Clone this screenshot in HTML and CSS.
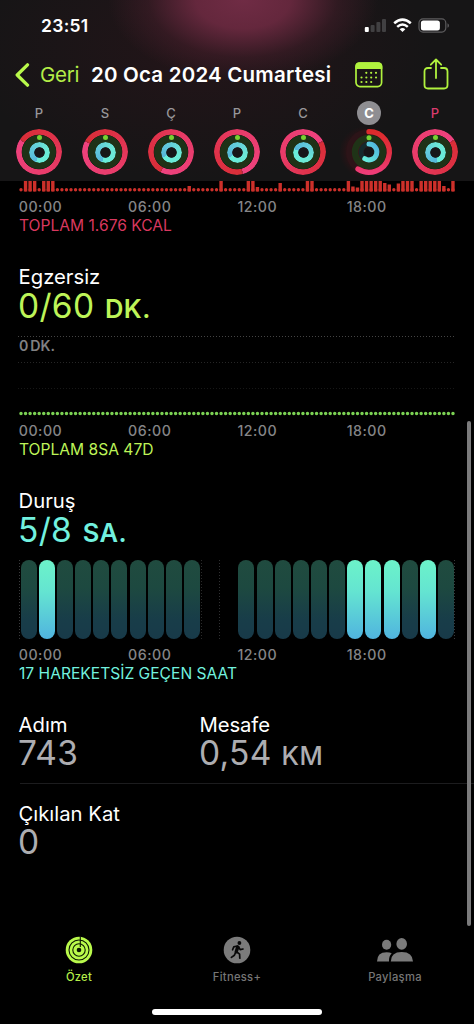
FILE: index.html
```html
<!DOCTYPE html>
<html lang="tr">
<head>
<meta charset="utf-8">
<title>Özet</title>
<link rel="stylesheet" href="styles.css">
</head>
<body>
<div class="phone">
  <header class="header">
    <div class="status">
      <span class="clock">23:51</span>
      <svg class="status-icons" width="86" height="16" viewBox="0 0 86 16">
        <rect x="0.8" y="9" width="4" height="5" rx="1" fill="#fff"/>
        <g fill="#414042"><rect x="6.6" y="7" width="4" height="7" rx="1"/><rect x="12.4" y="4" width="4" height="10" rx="1"/><rect x="18" y="1" width="4" height="13" rx="1"/></g>
        <g fill="none" stroke="#fff" stroke-width="2.5"><path d="M30.2 5.3Q38.5-2 46.8 5.3"/><path d="M33.2 8.9Q38.5 4.2 43.8 8.9"/></g>
        <path d="M38.5 14 35.7 11.2Q38.5 8.8 41.3 11.2Z" fill="#fff"/>
        <rect x="55" y=".9" width="26.800" height="13.2" rx="4" fill="none" stroke="#5d5c5e" stroke-width="1.2"/>
        <rect x="56.900" y="2.6" width="19" height="9.8" rx="2.5" fill="#fff"/>
        <path d="M83.500 5.3q1.5.6 1.5 2.3T83.500 9.8z" fill="#5d5c5e"/>
      </svg>
    </div>
    <nav class="nav">
      <svg class="back" width="15" height="26" viewBox="0 0 15 26"><path d="M12.5 2.800 2.200 13l10.300 10.200" fill="none" stroke="#b9f94b" stroke-width="3.300" stroke-linecap="round" stroke-linejoin="round"/></svg>
      <span class="back-label">Geri</span>
      <h1 class="date">20 Oca 2024 Cumartesi</h1>
      <svg class="calendar" width="28" height="26" viewBox="0 0 28 26">
        <rect x="1" y="1" width="25.600" height="23.600" rx="4" fill="none" stroke="#b0f23e" stroke-width="1.700"/>
        <path d="M.3 7V4.500Q.3.300 4.500.300H23Q27.300.300 27.300 4.500V7z" fill="#b0f23e"/>
        <path d="M11.300 10.800H22M6.500 15.500H22M6.500 20H17" fill="none" stroke="#b0f23e" stroke-width="2.200" stroke-linecap="round" stroke-dasharray="0 4.850"/>
      </svg>
      <svg class="share" width="26" height="32" viewBox="0 0 26 32" fill="none" stroke="#b0f23e" stroke-width="1.800" stroke-linecap="round" stroke-linejoin="round"><path d="M8 10H5Q1.500 10 1.500 13.500V27Q1.500 30.500 5 30.500H21Q24.500 30.500 24.500 27V13.500Q24.500 10 21 10H18M13 20V1.700M7.800 6.700 13 1.500l5.200 5.200"/></svg>
    </nav>
    <div class="week">
      <div class="day"><span class="letter">P</span><div class="ring" style="--end:302deg;--stand:200deg"><i class="move"></i><i class="exercise"></i><i class="stand"></i><i class="dot"></i></div></div>
      <div class="day"><span class="letter">S</span><div class="ring" style="--end:298deg;--stand:200deg"><i class="move"></i><i class="exercise"></i><i class="stand"></i><i class="dot"></i></div></div>
      <div class="day"><span class="letter">Ç</span><div class="ring" style="--end:206deg;--stand:240deg"><i class="move"></i><i class="exercise"></i><i class="stand"></i><i class="dot"></i></div></div>
      <div class="day"><span class="letter">P</span><div class="ring" style="--end:164deg;--stand:240deg"><i class="move"></i><i class="exercise"></i><i class="stand"></i><i class="dot"></i></div></div>
      <div class="day"><span class="letter">C</span><div class="ring" style="--end:60deg;--stand:290deg"><i class="move"></i><i class="exercise"></i><i class="stand"></i><i class="dot"></i></div></div>
      <div class="day"><span class="letter selected">C</span>
        <svg class="partial" width="66" height="56" viewBox="-33 -28 66 56">
          <defs>
            <linearGradient id="moveGrad" x1="0" y1="0" x2="0" y2="1"><stop offset="0" stop-color="#dd2b2c"/><stop offset=".5" stop-color="#e23044"/><stop offset="1" stop-color="#ef3c78"/></linearGradient>
            <linearGradient id="standGrad" x1="1" y1="0" x2="0" y2="1"><stop offset="0" stop-color="#50b4df"/><stop offset="1" stop-color="#67eedb"/></linearGradient>
            <radialGradient id="glow"><stop offset=".3" stop-color="#6c0d15" stop-opacity=".6"/><stop offset="1" stop-color="#4c0d15" stop-opacity="0"/></radialGradient>
          </defs>
          <circle cx="-4" r="26" fill="url(#glow)"/>
          <g fill="none">
            <circle r="20.300" stroke="#2c1418" stroke-width="5.300"/>
            <circle r="14" stroke="#1f3317" stroke-width="6.500"/>
            <circle r="7.900" stroke="#15292c" stroke-width="5"/>
            <circle r="5.300" fill="#161518"/>
            <path d="M0-20.300A20.300 20.300 0 1 1-11 17.060" stroke="url(#moveGrad)" stroke-width="5.300" stroke-linecap="round"/>
            <path d="M0-7.900A7.900 7.900 0 1 1-4.200 6.700" stroke="url(#standGrad)" stroke-width="5" stroke-linecap="round"/>
          </g>
          <circle cy="-14.300" r="2.500" fill="#79d231"/>
        </svg>
      </div>
      <div class="day"><span class="letter today">P</span><div class="ring" style="--end:56deg;--stand:170deg"><i class="move"></i><i class="exercise"></i><i class="stand"></i><i class="dot"></i></div></div>
    </div>
  </header>

  <main class="content">
    <section>
      <svg class="move-chart" width="455" height="17" viewBox="0 0 455 17" fill="none" stroke="#cc302a">
        <path d="M21 8.800H453.500" stroke-width="3.400" stroke-linecap="round" stroke-dasharray="0 4.547"/>
        <g stroke-width="3.400">
          <path d="M25.550 0V10.500M30.100 0V10.500M34.640 0V10.500M43.740 0V10.500M48.280 0V10.500M52.830 0V10.500M189.240 5V10.500M221.070 0V10.500M248.350 0V10.500M252.900 0V10.500M257.440 6V10.500M280.180 2V10.500M307.460 0V10.500M312 0V10.500M348.400 0V10.500M352.930 5.500V10.500M357.480 6.500V10.500"/>
          <path d="M362 0V10.500M366.570 0V10.500M371.120 0V10.500M375.670 0V10.500M380.210 0V10.500M384.760 2V10.500M389.310 3.500V10.500M398.400 2.500V10.500M402.950 0V10.500M407.500 0V10.500M412 0V10.500M421.140 0V10.500M425.680 0V10.500M430.230 0V10.500M434.780 0V10.500M439.320 0V10.500M443.870 5V10.500M452.960 0V10.500"/>
        </g>
      </svg>
      <div class="hours"><span>00:00</span><span>06:00</span><span>12:00</span><span>18:00</span></div>
      <p class="total move-total">TOPLAM 1.676 KCAL</p>
    </section>

    <section>
      <h2 class="title">Egzersiz</h2>
      <p class="value green">0/60 <span class="unit">DK.</span></p>
      <div class="exercise-chart">
        <div class="lane first"><span>0 DK.</span></div>
        <div class="lane second"></div>
        <div class="lane third"></div>
        <svg class="baseline" width="440" height="6" viewBox="0 0 440 6"><path d="M5 2.500H437.500" stroke="#7bd153" stroke-width="3.500" stroke-linecap="round" stroke-dasharray="0 4.547"/></svg>
      </div>
      <div class="hours"><span>00:00</span><span>06:00</span><span>12:00</span><span>18:00</span></div>
      <p class="total green">TOPLAM 8SA 47D</p>
    </section>

    <section>
      <h2 class="title">Duruş</h2>
      <p class="value cyan">5/8 <span class="unit">SA.</span></p>
      <div class="stand-chart">
        <i class="bar"></i><i class="bar lit"></i><i class="bar"></i><i class="bar"></i><i class="bar"></i><i class="bar"></i>
        <i class="bar"></i><i class="bar"></i><i class="bar"></i><i class="bar"></i><i class="gap"></i><i class="gap"></i>
        <i class="bar"></i><i class="bar"></i><i class="bar"></i><i class="bar"></i><i class="bar"></i><i class="bar"></i>
        <i class="bar lit"></i><i class="bar lit"></i><i class="bar lit"></i><i class="bar"></i><i class="bar lit"></i><i class="bar"></i>
      </div>
      <div class="hours"><span>00:00</span><span>06:00</span><span>12:00</span><span>18:00</span></div>
      <p class="total cyan">17 HAREKETSİZ GEÇEN SAAT</p>
    </section>

    <div class="stats">
      <div><h2 class="title">Adım</h2><p class="value grey">743</p></div>
      <div><h2 class="title mid">Mesafe</h2><p class="value grey">0,54 <span class="unit">KM</span></p></div>
    </div>
    <div class="floors"><h2 class="title">Çıkılan Kat</h2><p class="value grey">0</p></div>
  </main>

  <footer class="tabs">
    <div class="tab active">
      <svg width="28" height="28" viewBox="-14 -14 28 28"><circle r="13.300" fill="#b9f94b"/><g fill="none" stroke="#0b1602" stroke-width="1.100"><circle r="10"/><circle r="6.200"/></g><circle r="2.300" fill="#0b1602"/><path d="M1.300-13.500V-3" stroke="#0b1602" stroke-width="1.100"/></svg>
      <span>Özet</span>
    </div>
    <div class="tab">
      <svg width="28" height="28" viewBox="-14 -14 28 28"><circle r="13.300" fill="#7b7b7b"/><circle cx="2.400" cy="-7" r="1.900" fill="#080808"/><g fill="none" stroke="#080808" stroke-linecap="round" stroke-linejoin="round"><path d="M.8-3-.8 1.700" stroke-width="3.400"/><path d="M.4-4-3.200-3.200-4.400-.2M1.600-3 3.200-.4 6-1M-.2 2 2.600 4.200 2.800 8.200M-1.300 2.300-2.600 5.200-5.600 7.400" stroke-width="1.700"/></g></svg>
      <span>Fitness+</span>
    </div>
    <div class="tab">
      <svg width="36" height="28" viewBox="0 0 36 28" fill="#7b7b7b"><ellipse cx="9.600" cy="8.800" rx="4.600" ry="5"/><path d="M0 25.500Q0 16.200 9.600 16.200q3.200 0 5.100 1.100-3 3-2.700 8.200z"/><ellipse cx="24.700" cy="7.900" rx="5.300" ry="5.900"/><path d="M13.800 25.500Q13.800 16 24.700 16T36 25.500z"/></svg>
      <span>Paylaşma</span>
    </div>
    <div class="home"></div>
  </footer>
  <div class="scrollbar"></div>
</div>
</body>
</html>
```

FILE: styles.css
```css
* { box-sizing: border-box; }
body { margin: 0; background: #000; }
h1, h2, p { margin: 0; font-weight: 400; }
svg { display: block; flex: none; }
i { display: block; }

.phone {
  position: relative;
  display: flex;
  flex-direction: column;
  width: 474px;
  height: 1024px;
  overflow: hidden;
  background: #000;
  color: #fff;
  font-family: Inter, "Liberation Sans", sans-serif;
}

/* Header */
.header {
  flex: none;
  height: 181px;
  background:
    radial-gradient(ellipse 135px 82px at 243px 0, rgba(116, 45, 71, .95) 0, rgba(110, 42, 66, .88) 35%, rgba(75, 32, 46, .45) 70%, rgba(30, 22, 25, 0) 100%),
    radial-gradient(ellipse 230px 130px at 200px 50px, rgba(48, 20, 27, .5), rgba(30, 20, 22, 0)),
    #161516;
}
.status { display: flex; justify-content: space-between; padding: 16px 24px 0 41px; height: 52px; }
.clock { font-size: 17.5px; font-weight: 600; line-height: 20px; letter-spacing: .3px; }
.status-icons { margin-top: 2px; }
.nav { display: flex; align-items: center; height: 45px; padding-left: 15px; }
.back-label { width: 52px; padding-left: 10px; font-size: 20.5px; letter-spacing: -.25px; color: #b4ed48; white-space: nowrap; }
.date { width: 263px; margin-left: 9px; font-size: 20.5px; font-weight: 600; letter-spacing: .2px; white-space: nowrap; }
.calendar { margin-left: 1px; }
.share { margin: 0 0 2px 39.500px; }
.week { display: flex; padding-left: 6px; height: 84px; }
.day { display: flex; flex-direction: column; align-items: center; width: 66px; padding-top: 4px; }
.letter { width: 24px; height: 24px; border-radius: 50%; text-align: center; font-size: 13px; font-weight: 500; line-height: 24px; color: #98979a; }
.letter.selected { background: #8f8e92; color: #fff; font-weight: 700; }
.letter.today { color: #dc3b6e; }
.ring { display: grid; place-items: center; width: 46px; height: 46px; margin-top: 4px; }
.ring > i { grid-area: 1 / 1; border-radius: 50%; }
.partial { margin-top: -1px; }
.move {
  width: 46px; height: 46px;
  background: conic-gradient(from var(--end), #a92542 0, #d92e38 5deg, #de3146 90deg, #e83b68 200deg, #ee427f 360deg);
  mask: radial-gradient(circle, transparent 17px, #000 17.7px);
}
.exercise { width: 34px; height: 34px; background: radial-gradient(circle, #171619 5px, #1f3217 9px); }
.stand {
  width: 21px; height: 21px;
  background: conic-gradient(from var(--stand), #55b6d9 0, #62cbdc 100deg, #6ce9d5 220deg, #67edda 360deg);
  mask: radial-gradient(circle, transparent 4.9px, #000 5.6px);
}
.dot { align-self: start; width: 5px; height: 5px; margin-top: 6px; background: #79d231; }

/* Charts */
.content { flex: 1; min-height: 0; }
.content section { margin-bottom: 30px; }
.hours { display: grid; grid-template-columns: repeat(4, 109.300px); padding-left: 18.800px; font-size: 14.200px; font-weight: 500; line-height: 18px; letter-spacing: .5px; color: #858587; }
.total { padding-left: 19px; font-size: 15.600px; line-height: 19px; letter-spacing: 0; white-space: nowrap; }
.move-total { color: #d9385f; }
.title { padding-left: 18.500px; font-size: 20.300px; line-height: 24px; letter-spacing: 0; white-space: nowrap; }
.title.mid { letter-spacing: -.1px; }
.value { padding-left: 18px; font-size: 33.500px; line-height: 34px; height: 34px; letter-spacing: .3px; white-space: nowrap; }
.unit { margin-left: 1px; font-size: 25.500px; font-weight: 600; letter-spacing: .4px; }
.green { color: #bef458; }
.cyan { color: #72f1df; }
.grey { color: #adadb1; }
.grey .unit { margin-left: 0; font-weight: 500; letter-spacing: .6px; }
.exercise-chart { width: 456px; height: 99px; padding: 13px 0 0 16px; }
.lane { height: 26px; margin-left: 2px; width: 438px; background: repeating-linear-gradient(90deg, #444 0 1px, transparent 1px 3px) top / 100% 1px no-repeat; }
.lane span { display: block; padding: 1px 0 0 1px; font-size: 14.200px; line-height: 18px; font-weight: 600; letter-spacing: .1px; color: #818183; word-spacing: -2px; }
.lane.second { opacity: .55; }
.lane.third { height: 23px; opacity: .35; }
.stand-chart { display: flex; gap: 2.150px; height: 98.500px; padding: 13px 0 6.500px 20.700px; margin-right: 18px; background:
  repeating-linear-gradient(#3a3a3c 0 1px, transparent 1px 3px) 19px 13px / 1px 79px no-repeat,
  repeating-linear-gradient(#2a2a2a 0 1px, transparent 1px 3px) 201px 13px / 1px 79px no-repeat,
  repeating-linear-gradient(#303032 0 1px, transparent 1px 3px) 219px 13px / 1px 79px no-repeat,
  repeating-linear-gradient(#3a3a3c 0 1px, transparent 1px 3px) 454px 13px / 1px 79px no-repeat; }
.bar, .gap { flex: none; width: 16px; height: 79px; }
.bar { border-radius: 8px; background: linear-gradient(#204b3f, #1d4940 35%, #183d49 75%, #183a49); }
.bar.lit { background: linear-gradient(#6cf3c9, #64e4d1 40%, #50b4df); }

/* Statistics */
.stats { display: grid; grid-template-columns: 181px 1fr; height: 70.500px; }
.stats .value, .floors .value { line-height: 33px; }
.floors { padding-top: 18.500px; background: linear-gradient(#1c1c1e, #1c1c1e) 20px 0 / 100% 1px no-repeat; }

/* Tabs */
.tabs { flex: none; display: grid; grid-template-columns: repeat(3, 158px); grid-template-rows: 73px 6px; height: 88px; background: #000; }
.tab { display: flex; flex-direction: column; align-items: center; font-size: 11.200px; font-weight: 500; line-height: 14px; letter-spacing: .3px; color: #767676; }
.tab svg { margin-bottom: 6px; }
.tab.active { color: #b4ed48; }
.home { grid-column: 1 / -1; justify-self: center; width: 170px; height: 6px; border-radius: 3px; background: #fff; }
.scrollbar { position: absolute; left: 467px; top: 421px; width: 4px; height: 505px; border-radius: 2px; background: #7b7b7c; }
```
